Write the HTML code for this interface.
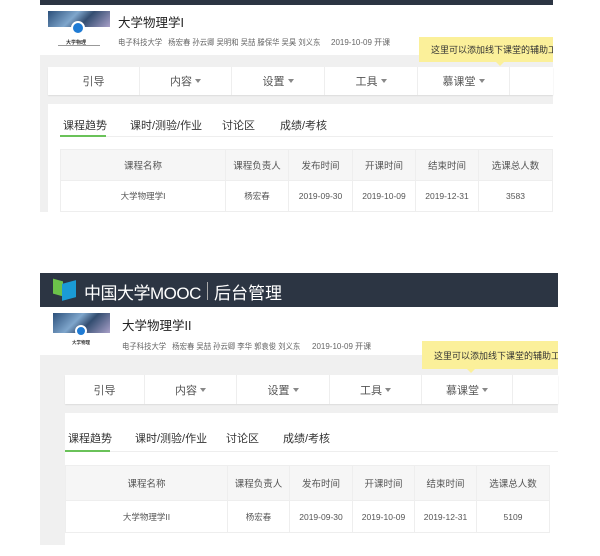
<!DOCTYPE html>
<html><head><meta charset="utf-8"><style>
*{margin:0;padding:0;box-sizing:border-box}
body{width:600px;height:556px;background:#fff;position:relative;overflow:hidden;font-family:"Liberation Sans","Noto Sans CJK SC",sans-serif;color:#333}
.a{position:absolute}
.nav{position:absolute;background:#fff;display:flex;font-size:11px;color:#555;box-shadow:0 1px 1px #ddd}
.nav div{border-right:1px solid #eee;display:flex;align-items:center;justify-content:center}
.car{display:inline-block;width:0;height:0;border-left:3px solid transparent;border-right:3px solid transparent;border-top:4px solid #888;margin-left:3px}
.tip{position:absolute;background:#fbf09a;font-size:9px;color:#333;padding-left:12px;display:flex;align-items:center;overflow:hidden;white-space:nowrap}
.tabs{position:absolute;font-size:11px;color:#333;white-space:nowrap}
.tabs span{position:absolute;top:0}
table{position:absolute;border-collapse:collapse;font-size:8.5px;color:#555;text-align:center}
td{border:1px solid #eee}
tr.h td{background:#f6f6f6;font-size:9.5px}
.logo{position:absolute;background:linear-gradient(135deg,#2b4f7a,#7fa6cc 40%,#334d70 60%,#a9a0c8);}
.dot{position:absolute;border-radius:50%;background:#1f7bd4;border:2px solid #fff}
.sub{position:absolute;font-size:8px;color:#666;white-space:nowrap;transform:scaleX(0.92);transform-origin:0 0}
</style></head><body>
<!-- block 1 -->
<div class="a" style="left:40px;top:0;width:513px;height:5px;background:#2c3543"></div>
<div class="a" style="left:40px;top:5px;width:513px;height:207px;background:#f0f0f0"></div>
<div class="a" style="left:40px;top:5px;width:513px;height:50px;background:#fff"></div>
<div class="logo" style="left:48px;top:11px;width:62px;height:16px"></div>
<div class="dot" style="left:71px;top:21px;width:14px;height:14px"></div>
<div class="a" style="left:66px;top:39px;font-size:5px;font-weight:bold">大学物理</div>
<div class="a" style="left:58px;top:45px;width:42px;height:1px;background:#999"></div>
<div class="a" style="left:118px;top:12px;font-size:12.5px;color:#222">大学物理学I</div>
<div class="sub" style="left:118px;top:37px">电子科技大学 &nbsp; 杨宏春 孙云卿 吴明和 吴喆 滕保华 吴昊 刘义东</div>
<div class="a" style="left:331px;top:37px;font-size:8px;color:#666;white-space:nowrap">2019-10-09 开课</div>
<div class="nav" style="left:48px;top:67px;width:505px;height:28px">
<div style="width:92px">引导</div><div style="width:92px">内容<span class="car"></span></div><div style="width:93px">设置<span class="car"></span></div><div style="width:93px">工具<span class="car"></span></div><div style="width:92px">慕课堂<span class="car"></span></div><div style="width:43px;border:0"></div></div>
<div class="tip" style="left:419px;top:37px;width:134px;height:25px">这里可以添加线下课堂的辅助工具</div>
<div class="a" style="left:496px;top:62px;border-left:4px solid transparent;border-right:4px solid transparent;border-top:4px solid #fbf09a"></div>
<div class="a" style="left:48px;top:104px;width:505px;height:108px;background:#fff"></div>
<div class="tabs" style="left:0;top:117px"><span style="left:63px">课程趋势</span><span style="left:130px">课时/测验/作业</span><span style="left:222px">讨论区</span><span style="left:280px">成绩/考核</span></div>
<div class="a" style="left:60px;top:136px;width:493px;height:1px;background:#eee"></div>
<div class="a" style="left:60px;top:135px;width:46px;height:2px;background:#6ac259"></div>
<table style="left:60px;top:149px;width:493px">
<tr class="h" style="height:31px"><td style="width:165px">课程名称</td><td style="width:63px">课程负责人</td><td style="width:64px">发布时间</td><td style="width:63px">开课时间</td><td style="width:63px">结束时间</td><td>选课总人数</td></tr>
<tr style="height:31px"><td>大学物理学I</td><td>杨宏春</td><td>2019-09-30</td><td>2019-10-09</td><td>2019-12-31</td><td>3583</td></tr></table>
<!-- block 2 -->
<div class="a" style="left:40px;top:273px;width:518px;height:34px;background:#2c3543"></div>
<div class="a" style="left:53px;top:280px;width:10px;height:15px;background:#6cc24a;transform:skewY(15deg)"></div>
<div class="a" style="left:62px;top:282px;width:14px;height:17px;background:#1a9bd6;transform:skewY(-15deg)"></div>
<div class="a" style="left:84px;top:279px;font-size:17px;color:#fff;white-space:nowrap;letter-spacing:-0.5px">中国大学MOOC</div>
<div class="a" style="left:207px;top:282px;width:1px;height:18px;background:#aaa"></div>
<div class="a" style="left:214px;top:279px;font-size:17px;color:#fff">后台管理</div>
<div class="a" style="left:40px;top:307px;width:518px;height:238px;background:#f0f0f0"></div>
<div class="a" style="left:40px;top:307px;width:518px;height:48px;background:#fff"></div>
<div class="logo" style="left:53px;top:313px;width:57px;height:20px"></div>
<div class="dot" style="left:75px;top:325px;width:12px;height:12px"></div>
<div class="a" style="left:72px;top:340px;font-size:4.5px;font-weight:bold">大学物理</div>
<div class="a" style="left:122px;top:315px;font-size:12.5px;color:#222">大学物理学II</div>
<div class="sub" style="left:122px;top:341px">电子科技大学 &nbsp; 杨宏春 吴喆 孙云卿 李华 郭袁俊 刘义东</div>
<div class="a" style="left:312px;top:341px;font-size:8px;color:#666;white-space:nowrap">2019-10-09 开课</div>
<div class="nav" style="left:65px;top:375px;width:493px;height:29px">
<div style="width:80px">引导</div><div style="width:92px">内容<span class="car"></span></div><div style="width:93px">设置<span class="car"></span></div><div style="width:92px">工具<span class="car"></span></div><div style="width:91px">慕课堂<span class="car"></span></div><div style="width:45px;border:0"></div></div>
<div class="tip" style="left:422px;top:341px;width:136px;height:28px">这里可以添加线下课堂的辅助工具</div>
<div class="a" style="left:467px;top:369px;border-left:4px solid transparent;border-right:4px solid transparent;border-top:4px solid #fbf09a"></div>
<div class="a" style="left:65px;top:413px;width:493px;height:132px;background:#fff"></div>
<div class="tabs" style="left:0;top:430px"><span style="left:68px">课程趋势</span><span style="left:135px">课时/测验/作业</span><span style="left:226px">讨论区</span><span style="left:283px">成绩/考核</span></div>
<div class="a" style="left:65px;top:451px;width:493px;height:1px;background:#eee"></div>
<div class="a" style="left:65px;top:450px;width:45px;height:2px;background:#6ac259"></div>
<table style="left:65px;top:465px;width:485px">
<tr class="h" style="height:35px"><td style="width:162px">课程名称</td><td style="width:62px">课程负责人</td><td style="width:63px">发布时间</td><td style="width:62px">开课时间</td><td style="width:62px">结束时间</td><td>选课总人数</td></tr>
<tr style="height:32px"><td>大学物理学II</td><td>杨宏春</td><td>2019-09-30</td><td>2019-10-09</td><td>2019-12-31</td><td>5109</td></tr></table>
</body></html>
